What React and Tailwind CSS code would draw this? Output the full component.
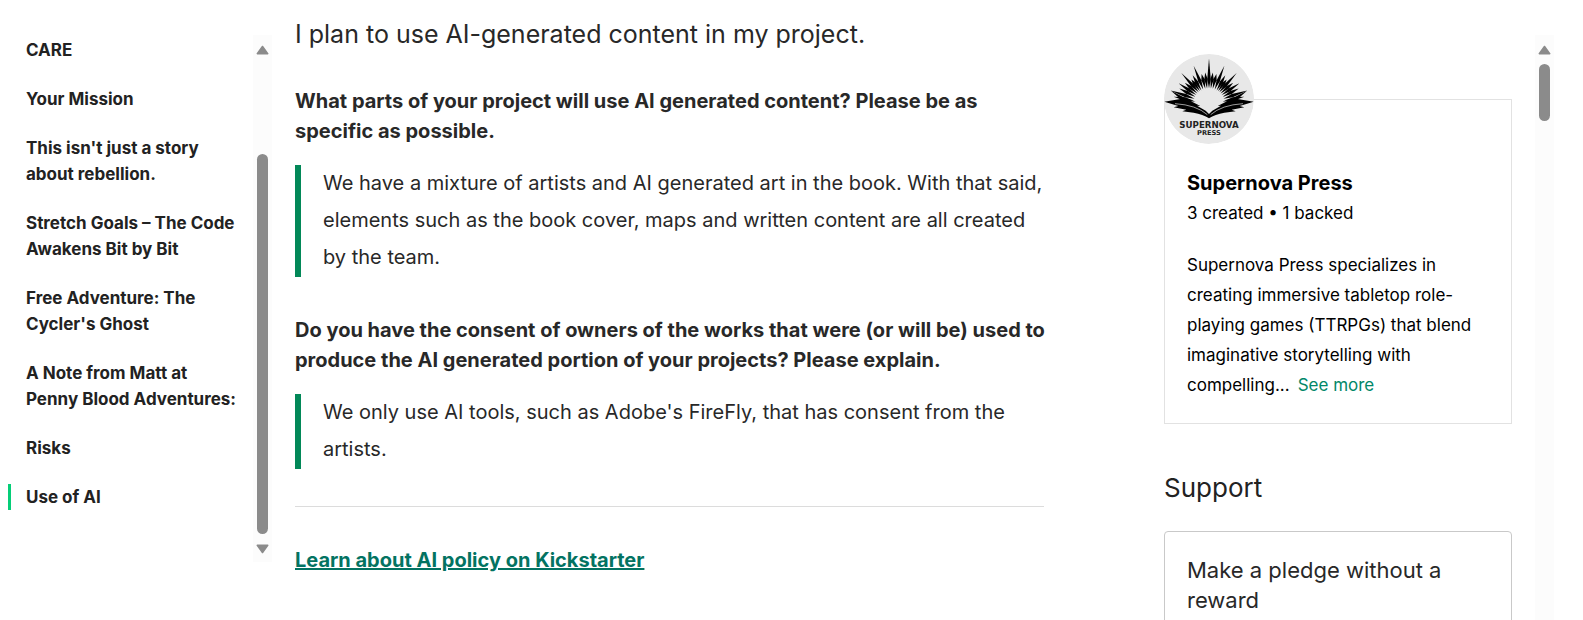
import clsx from 'clsx'

const navItems = [
  { id: 'care', label: 'CARE' },
  { id: 'mission', label: 'Your Mission' },
  { id: 'rebellion', label: "This isn't just a story about rebellion." },
  { id: 'stretch-goals', label: 'Stretch Goals – The Code Awakens Bit by Bit' },
  { id: 'free-adventure', label: "Free Adventure: The Cycler's Ghost" },
  { id: 'note', label: 'A Note from Matt at Penny Blood Adventures:' },
  { id: 'risks', label: 'Risks' },
  { id: 'use-of-ai', label: 'Use of AI' },
]

const questions = [
  {
    question: 'What parts of your project will use AI generated content? Please be as specific as possible.',
    answer:
      'We have a mixture of artists and AI generated art in the book. With that said, elements such as the book cover, maps and written content are all created by the team.',
  },
  {
    question:
      'Do you have the consent of owners of the works that were (or will be) used to produce the AI generated portion of your projects? Please explain.',
    answer: "We only use AI tools, such as Adobe's FireFly, that has consent from the artists.",
  },
]

// angle from vertical, outer radius
const rays = [
  [0, 136], [7, 94], [14, 92], [22, 123], [30, 98], [36, 90], [42, 124],
  [49, 96], [56, 110], [63, 100], [71, 122], [79, 108],
]

function rayPoints(angle, outer) {
  const point = (deg, r) => {
    const rad = (deg * Math.PI) / 180
    return `${(178 + r * Math.sin(rad)).toFixed(1)},${(190 - r * Math.cos(rad)).toFixed(1)}`
  }
  return [point(angle, outer), point(angle + 4, 74), point(angle, 46), point(angle - 4, 74)].join(' ')
}

function SupernovaLogo() {
  return (
    <svg viewBox="43 41 270 270" className="h-[90px] w-[90px] rounded-full" role="img" aria-label="Supernova Press">
      <circle cx="178" cy="176" r="135" fill="#e8e8e8" />
      {rays.map(([angle, outer]) => (
        <g key={angle}>
          <polygon points={rayPoints(angle, outer)} />
          {angle > 0 && <polygon points={rayPoints(-angle, outer)} />}
        </g>
      ))}
      {[false, true].map((flip) => (
        <g key={String(flip)} transform={flip ? 'translate(356 0) scale(-1 1)' : undefined}>
          <path d="M44 184 L92 176 L64 151 L108 174 L138 184 L124 183 L152 197 L142 196 L168 211 L178 221 L178 234 Q160 222 132 217 L98 213 L110 208 L72 201 L86 197 Z" />
          <path d="M76 190 Q140 194 173 223" fill="none" stroke="#e8e8e8" strokeWidth="2" />
        </g>
      ))}
      <g fontFamily="DejaVu Sans" fontWeight="700" textAnchor="middle" fill="#222222">
        <text x="178" y="262" fontSize="26">
          SUPERNOVA
        </text>
        <text x="178" y="284" fontSize="20">
          PRESS
        </text>
      </g>
    </svg>
  )
}

function ScrollArrow({ down }) {
  return (
    <svg viewBox="0 0 13 10" className={clsx('h-[10px] w-[13px] shrink-0', down && 'rotate-180')} aria-hidden="true">
      <path d="M6.5 1.5 L11.7 8.6 H1.3 Z" fill="#8b8b8b" stroke="#8b8b8b" strokeWidth="1.6" strokeLinejoin="round" />
    </svg>
  )
}

function StoryNav() {
  return (
    <nav className="w-[253px] shrink-0 pr-4 pl-2" aria-label="Story">
      <ul className="flex flex-col gap-[23px] pt-[2px]">
        {navItems.map((item) => (
          <li key={item.id}>
            <a
              href={`#${item.id}`}
              className={clsx(
                'block border-l-3 pl-[15px] text-[17px] leading-[26px] font-bold text-[#222222]',
                item.id === 'use-of-ai' ? 'border-[#05ce78]' : 'border-transparent'
              )}
            >
              {item.label}
            </a>
          </li>
        ))}
      </ul>
    </nav>
  )
}

function AiSection() {
  return (
    <main id="use-of-ai" className="min-w-0 flex-1 text-[#282828]">
      <h2 className="pt-[15px] text-[25px] leading-[38px]">I plan to use AI-generated content in my project.</h2>
      <div className="mt-[33px] flex flex-col gap-[38px]">
        {questions.map(({ question, answer }) => (
          <div key={question}>
            <h3 className="-mr-2 text-[20px] leading-[30px] font-bold">{question}</h3>
            <blockquote className="mt-[19px] border-l-6 border-[#028858] pb-px pl-[22px] text-[20px] leading-[37px]">
              {answer}
            </blockquote>
          </div>
        ))}
      </div>
      <hr className="mt-[37px] border-[#dcdcdc]" />
      <a href="#ai-policy" className="mt-[38px] inline-block text-[20px] leading-[30px] font-bold text-[#037362] underline">
        Learn about AI policy on Kickstarter
      </a>
    </main>
  )
}

function CreatorSidebar() {
  return (
    <aside className="w-[348px] shrink-0 pt-[54px]">
      <div>
        <SupernovaLogo />
        <section className="-mt-[45px] border border-[#e2e2e2] px-[22px] pt-[68px] pb-[23px] text-[17px] leading-[30px] text-black">
          <h3 className="text-[20px] font-bold">Supernova Press</h3>
          <p>3 created • 1 backed</p>
          <p className="mt-[22px]">
            Supernova Press specializes in creating immersive tabletop role-playing games (TTRPGs) that blend imaginative
            storytelling with compelling...
            <button type="button" className="ml-2 text-[#028768]">
              See more
            </button>
          </p>
        </section>
      </div>

      <h2 className="mt-[45px] text-[26px] leading-[38px] text-[#222222]">Support</h2>
      <section className="mt-6 rounded border border-[#c9c9c9] px-[22px] py-[23px]">
        <h3 className="text-[22px] leading-[30px] text-[#282828]">Make a pledge without a reward</h3>
      </section>
    </aside>
  )
}

function App() {
  return (
    <div className="flex h-screen overflow-hidden bg-white font-['Inter',sans-serif]">
      <div className="flex h-[562px] shrink-0 pt-[35px]">
        <StoryNav />
        <div className="flex w-[19px] flex-col items-center bg-[#fcfcfc] py-2 pt-[10px]">
          <ScrollArrow />
          <div className="mt-[99px] w-[11px] flex-1 rounded-full bg-[#8b8b8b]" />
          <div className="mt-[10px] flex">
            <ScrollArrow down />
          </div>
        </div>
      </div>

      <div className="flex min-w-0 flex-1 gap-[120px] pl-[23px]">
        <AiSection />
        <CreatorSidebar />
      </div>

      <div className="mr-[29px] ml-[23px] flex shrink-0 pt-[35px]">
        <div className="flex w-[19px] flex-col items-center bg-[#fcfcfc] pt-[10px]">
          <ScrollArrow />
          <div className="mt-[9px] h-[57px] w-[11px] rounded-full bg-[#8b8b8b]" />
        </div>
      </div>
    </div>
  )
}

export default App
